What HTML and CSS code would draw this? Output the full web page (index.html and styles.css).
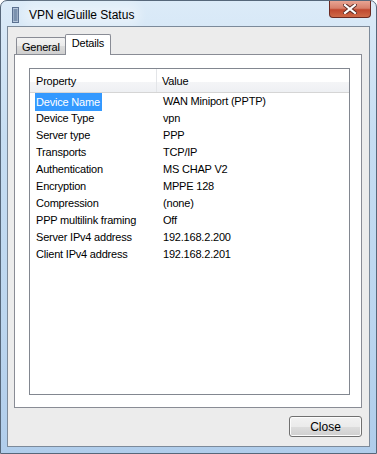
FILE: index.html
```html
<!DOCTYPE html>
<html lang="en">
<head>
    <meta charset="UTF-8">
    <meta name="viewport" content="width=device-width, initial-scale=1.0">
    <title>VPN elGuille Status</title>
    <link rel="stylesheet" href="styles.css">
</head>
<body>
    <div class="window">
        <div class="titlebar">
            <svg class="app-icon" width="7" height="16" viewBox="0 0 7 16">
                <rect x="0.5" y="0.5" width="6" height="15" fill="#b8c8dc" stroke="#5a7090"/>
                <line x1="1.5" y1="3" x2="5.5" y2="3" stroke="#3d5a80"/>
                <line x1="1.5" y1="5" x2="5.5" y2="5" stroke="#3d5a80"/>
                <line x1="1.5" y1="7" x2="5.5" y2="7" stroke="#3d5a80"/>
                <line x1="1.5" y1="9" x2="5.5" y2="9" stroke="#3d5a80"/>
                <line x1="1.5" y1="11" x2="5.5" y2="11" stroke="#3d5a80"/>
                <line x1="1.5" y1="13" x2="5.5" y2="13" stroke="#3d5a80"/>
            </svg>
            <span class="title">VPN elGuille Status</span>
            <div class="close-x">
                <svg width="14" height="10" viewBox="0 0 14 10">
                    <path d="M2 1 L12 9 M12 1 L2 9" stroke="#5a2a24" stroke-width="4" stroke-linecap="square"/>
                    <path d="M2 1 L12 9 M12 1 L2 9" stroke="#ffffff" stroke-width="2.2" stroke-linecap="square"/>
                </svg>
            </div>
        </div>
        <div class="client">
            <div class="tabs">
                <div class="tab">General</div>
                <div class="tab active">Details</div>
            </div>
            <div class="panel">
                <div class="listview">
                    <div class="row header">
                        <div class="col-prop">Property</div>
                        <div class="col-val">Value</div>
                    </div>
                    <div class="row"><div class="col-prop"><span class="selected">Device Name</span></div><div class="col-val">WAN Miniport (PPTP)</div></div>
                    <div class="row"><div class="col-prop">Device Type</div><div class="col-val">vpn</div></div>
                    <div class="row"><div class="col-prop">Server type</div><div class="col-val">PPP</div></div>
                    <div class="row"><div class="col-prop">Transports</div><div class="col-val">TCP/IP</div></div>
                    <div class="row"><div class="col-prop">Authentication</div><div class="col-val">MS CHAP V2</div></div>
                    <div class="row"><div class="col-prop">Encryption</div><div class="col-val">MPPE 128</div></div>
                    <div class="row"><div class="col-prop">Compression</div><div class="col-val">(none)</div></div>
                    <div class="row"><div class="col-prop">PPP multilink framing</div><div class="col-val">Off</div></div>
                    <div class="row"><div class="col-prop">Server IPv4 address</div><div class="col-val">192.168.2.200</div></div>
                    <div class="row"><div class="col-prop">Client IPv4 address</div><div class="col-val">192.168.2.201</div></div>
                </div>
            </div>
            <div class="buttons">
                <button class="btn">Close</button>
            </div>
        </div>
    </div>
</body>
</html>
```

FILE: styles.css
```css
body {
    margin: 0;
    font-family: "Liberation Sans", Arial, sans-serif;
    font-size: 11px;
    letter-spacing: -0.2px;
    color: #000;
    background: #fff;
}
.window {
    width: 377px;
    height: 454px;
    box-sizing: border-box;
    border: 1px solid #56677a;
    border-radius: 7px 7px 0 0;
    background: linear-gradient(180deg, #dcebf8 0%, #c6ddf2 30%, #bcd6ef 70%, #b0cdeb 100%);
    padding: 0 6px 6px 6px;
    display: flex;
    flex-direction: column;
}
.titlebar {
    height: 25px;
    display: flex;
    align-items: center;
}
.app-icon {
    margin-left: 5px;
    margin-top: 3px;
}
.title {
    margin-left: 8px;
    margin-top: 3px;
    padding: 0 2px;
    border-radius: 10px;
    font-size: 12px;
    letter-spacing: 0;
    background: rgba(255, 255, 255, 0.3);
    box-shadow: 0 0 8px 5px rgba(255, 255, 255, 0.3);
    color: #000;
}
.close-x {
    margin-left: auto;
    margin-right: -1px;
    align-self: flex-start;
    width: 42px;
    height: 17px;
    box-sizing: border-box;
    border: 1px solid #6b2a22;
    border-top: none;
    border-radius: 0 0 4px 4px;
    background: linear-gradient(180deg, #e8a493 0%, #d7806b 45%, #c0482f 55%, #cf6a48 100%);
    display: flex;
    align-items: center;
    justify-content: center;
}
.client {
    flex: 1;
    border: 1px solid #7c8a9a;
    background: #ececec;
    padding: 8px 7px 9px 6px;
    display: flex;
    flex-direction: column;
}
.tabs {
    display: flex;
    align-items: flex-end;
    padding-left: 2px;
    height: 19px;
}
.tab {
    height: 17px;
    box-sizing: border-box;
    padding: 0 5px;
    border: 1px solid #898c95;
    border-bottom: none;
    border-radius: 2px 2px 0 0;
    background: linear-gradient(180deg, #f3f3f3 0%, #ebebeb 50%, #dcdcdc 51%, #cfcfcf 100%);
    line-height: 18px;
}
.tab.active {
    height: 21px;
    margin-left: -1px;
    margin-bottom: -1px;
    padding: 0 6px;
    background: #fff;
    position: relative;
    line-height: 17px;
}
.panel {
    flex: 1;
    border: 1px solid #898c95;
    background: #fff;
    padding: 13px 11px 12px 14px;
    display: flex;
}
.listview {
    flex: 1;
    border: 1px solid #828790;
    background: #fff;
}
.row {
    display: flex;
    height: 17px;
    line-height: 17px;
    padding-left: 6px;
}
.row.header {
    height: 24px;
    line-height: 24px;
    box-sizing: border-box;
    background: linear-gradient(180deg, #ffffff 0%, #ffffff 55%, #f4f5f7 56%, #eef0f3 100%);
    border-bottom: 1px solid #d5d5d5;
    padding-left: 0;
}
.row.header .col-prop {
    box-sizing: border-box;
    width: 127px;
    padding-left: 6px;
    border-right: 1px solid #e3e5e8;
}
.row.header .col-val {
    padding-left: 5px;
}
.col-prop {
    width: 127px;
    flex-shrink: 0;
}
.selected {
    display: inline-block;
    background: #3399ff;
    color: #fff;
    padding: 0 2px 0 1px;
    margin-left: -1px;
    line-height: 18px;
}
.buttons {
    display: flex;
    justify-content: flex-end;
    padding-top: 8px;
}
.btn {
    width: 73px;
    height: 21px;
    font-family: inherit;
    font-size: 12px;
    letter-spacing: 0;
    color: #000;
    border: 1px solid #707070;
    border-radius: 3px;
    background: linear-gradient(180deg, #f2f2f2 0%, #ebebeb 50%, #dddddd 51%, #cfcfcf 100%);
    box-shadow: inset 0 0 0 1px #fcfcfc;
    padding: 0;
}
```
